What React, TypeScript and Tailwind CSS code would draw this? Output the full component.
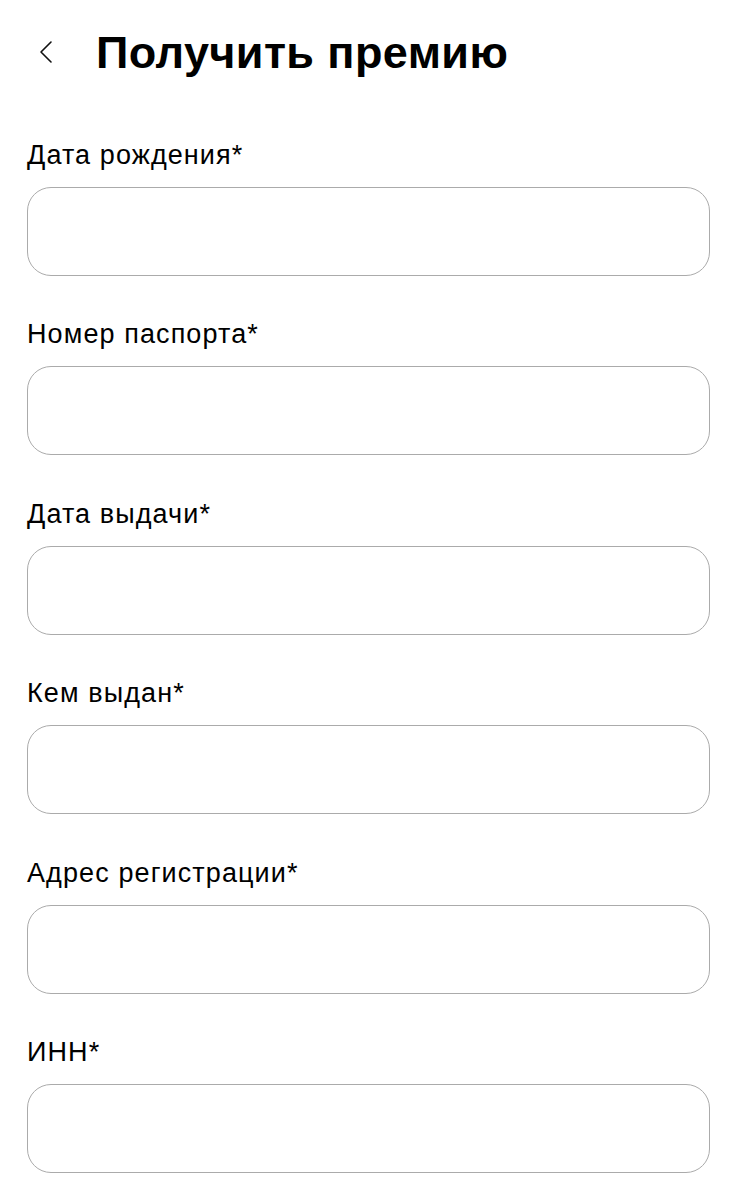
const fields = [
  'Дата рождения*',
  'Номер паспорта*',
  'Дата выдачи*',
  'Кем выдан*',
  'Адрес регистрации*',
  'ИНН*',
];

function ChevronLeft() {
  return (
    <svg width="14" height="24" viewBox="0 0 14 24" fill="none">
      <path d="M12 2 L2 12 L12 22" stroke="#111" strokeWidth="1.6" strokeLinecap="round" strokeLinejoin="round" />
    </svg>
  );
}

export default function App() {
  return (
    <div className="min-h-[1200px] bg-white font-['Liberation_Sans',Arial,sans-serif] text-black">
      <header className="flex h-[108px] items-center pl-[39px] pb-[4px]">
        <button type="button" className="flex h-[24px] w-[14px] items-center">
          <ChevronLeft />
        </button>
        <h1 className="ml-[43px] text-[45px] font-bold leading-none tracking-[0.4px]">Получить премию</h1>
      </header>
      <form className="flex flex-col px-[27px]">
        {fields.map((label) => (
          <label key={label} className="flex h-[179.4px] flex-col">
            <span className="mt-[34px] text-[27px] leading-none tracking-[1.1px]">{label}</span>
            <input
              type="text"
              className="mt-[18px] h-[89px] w-full rounded-[24px] border-[1.5px] border-[#ababab] bg-white px-5 outline-none"
            />
          </label>
        ))}
      </form>
    </div>
  );
}
